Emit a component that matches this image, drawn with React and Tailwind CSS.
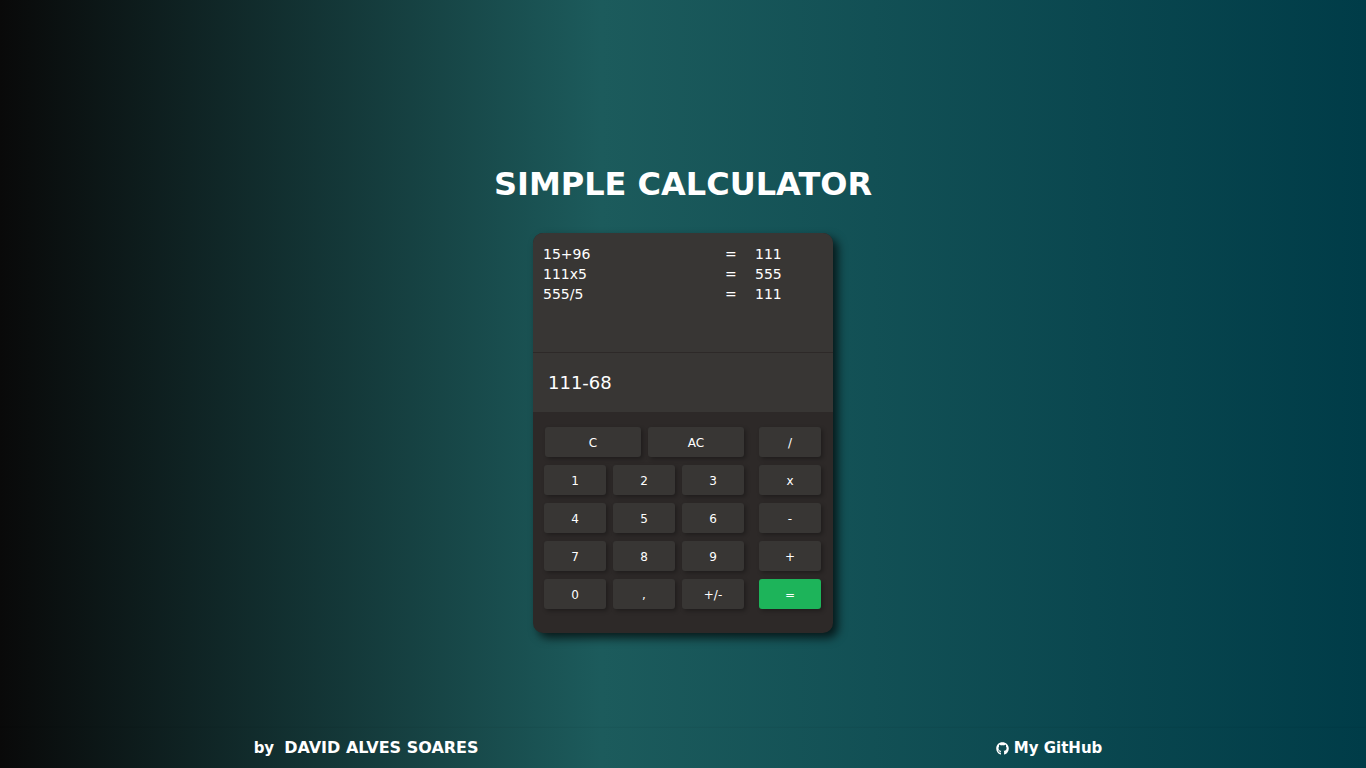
import React, { useState } from "react";
import { FaGithub } from "react-icons/fa";

const keyBase =
  "h-[30px] rounded-[3px] pt-[2px] text-xs text-white shadow-[2px_2px_4px_rgba(0,0,0,0.3)] cursor-pointer";

function Key({ label, onPress, wide = false, accent = false }) {
  return (
    <button
      type="button"
      onClick={() => onPress(label)}
      className={`${keyBase} ${wide ? "w-24" : "w-[62px]"} ${accent ? "bg-[#1db45a]" : "bg-[#383634]"}`}
    >
      {label}
    </button>
  );
}

const digitRows = [
  ["1", "2", "3"],
  ["4", "5", "6"],
  ["7", "8", "9"],
  ["0", ",", "+/-"],
];

const operators = ["/", "x", "-", "+", "="];

const initialHistory = [
  { expression: "15+96", result: "111" },
  { expression: "111x5", result: "555" },
  { expression: "555/5", result: "111" },
];

function evaluate(expression) {
  const match = expression.match(/^(-?[\d,]+)([-+x/])(-?[\d,]+)$/);
  if (!match) return null;
  const a = Number(match[1].replace(",", "."));
  const b = Number(match[3].replace(",", "."));
  const results = { "+": a + b, "-": a - b, x: a * b, "/": a / b };
  return String(results[match[2]]).replace(".", ",");
}

function Calculator() {
  const [history, setHistory] = useState(initialHistory);
  const [entry, setEntry] = useState("111-68");

  const press = (label) => {
    if (label === "AC") {
      setEntry("");
      setHistory([]);
    } else if (label === "C") {
      setEntry("");
    } else if (label === "+/-") {
      setEntry(entry.startsWith("-") ? entry.slice(1) : `-${entry}`);
    } else if (label === "=") {
      const result = evaluate(entry);
      if (result !== null) {
        setHistory([...history, { expression: entry, result }].slice(-5));
        setEntry(result);
      }
    } else {
      setEntry(entry + label);
    }
  };

  return (
    <section
      aria-label="Calculator"
      className="w-[300px] overflow-hidden rounded-[10px] bg-[#2d2928] shadow-[5px_5px_10px_rgba(0,0,0,0.7)]"
    >
      <div className="h-[120px] border-b border-[#2d2928] bg-[#383634] px-[10px] pt-[11px]">
        <table className="w-full table-fixed text-left text-sm">
          <tbody>
            {history.map((item, index) => (
              <tr key={index}>
                <td className="w-[65%]">{item.expression}</td>
                <td className="w-[30px]">=</td>
                <td>{item.result}</td>
              </tr>
            ))}
          </tbody>
        </table>
      </div>
      <output className="flex h-[59px] items-center bg-[#383634] px-[15px] text-lg">
        {entry}
      </output>
      <div className="flex justify-between pt-[15px] pr-3 pb-6 pl-[11px]">
        <div className="flex flex-col gap-2">
          <div className="flex justify-end gap-[7px]">
            <Key label="C" onPress={press} wide />
            <Key label="AC" onPress={press} wide />
          </div>
          {digitRows.map((row) => (
            <div key={row[0]} className="flex gap-[7px]">
              {row.map((label) => (
                <Key key={label} label={label} onPress={press} />
              ))}
            </div>
          ))}
        </div>
        <div className="flex flex-col gap-2">
          {operators.map((label) => (
            <Key key={label} label={label} onPress={press} accent={label === "="} />
          ))}
        </div>
      </div>
    </section>
  );
}

export default function App() {
  return (
    <div className="flex min-h-screen flex-col bg-[linear-gradient(90deg,#090909_0%,#1c5b5c_44%,#003c48_100%)] font-['DejaVu_Sans',sans-serif] text-white">
      <main className="flex flex-1 flex-col items-center justify-center gap-[30px] pt-[70px]">
        <h1 className="text-[32px] leading-[38px] font-bold">SIMPLE CALCULATOR</h1>
        <Calculator />
      </main>
      <footer className="flex h-10 items-center justify-around text-[15px] font-bold shadow-[0_0_2px_rgba(0,0,0,0.12)]">
        <p className="flex items-center gap-[10px] pr-[10px]">
          by <span className="text-base">DAVID ALVES SOARES</span>
        </p>
        <a href="https://github.com" className="flex items-center gap-[5px] pr-[10px]">
          <FaGithub aria-hidden="true" className="size-[13px]" />
          My GitHub
        </a>
      </footer>
    </div>
  );
}
